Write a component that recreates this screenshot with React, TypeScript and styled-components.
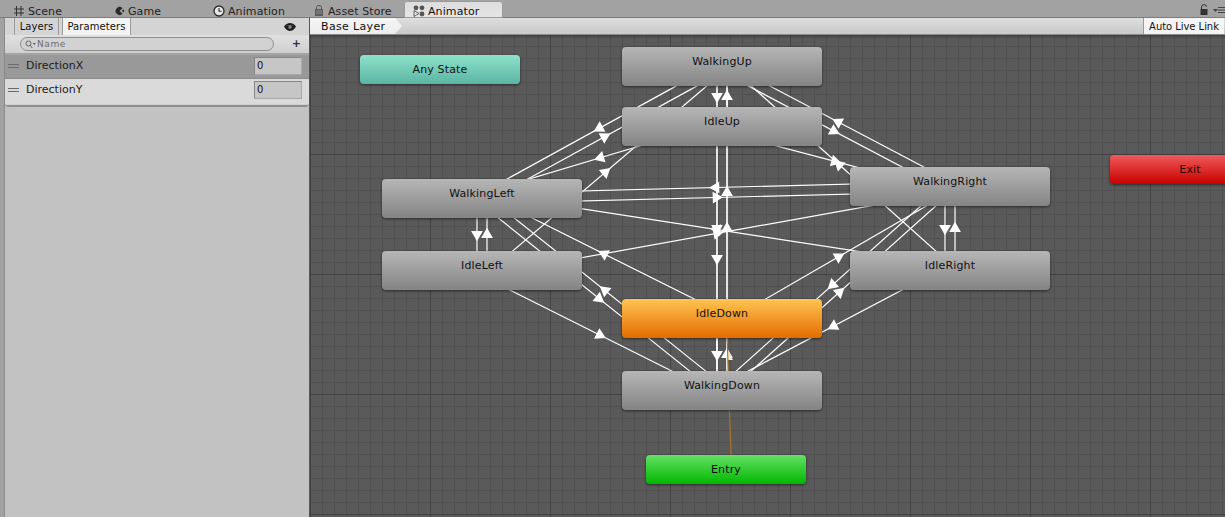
import React from "react";
import styled, { createGlobalStyle } from "styled-components";

const UI_FONT = `"DejaVu Sans", "Liberation Sans", sans-serif`;

const Global = createGlobalStyle`
  html, body { margin: 0; padding: 0; background: #a2a2a2; }
  body { font-family: ${UI_FONT}; font-size: 11px; color: #111; }
  * { box-sizing: border-box; }
`;

const Page = styled.div`
  width: 1225px;
  height: 517px;
  display: flex;
  flex-direction: column;
  overflow: hidden;
  background: #a2a2a2;
`;

const TabBar = styled.div`
  height: 18px;
  display: flex;
  align-items: flex-end;
  padding-left: 4px;
  border-bottom: 1px solid #7c7c7c;
`;

const Tab = styled.div<{ $active?: boolean; $width: number; $pad: number }>`
  width: ${(p) => p.$width}px;
  height: ${(p) => (p.$active ? 17 : 16)}px;
  padding-left: ${(p) => p.$pad}px;
  padding-top: ${(p) => (p.$active ? 3 : 4)}px;
  display: flex;
  align-items: center;
  gap: 3px;
  color: ${(p) => (p.$active ? "#111" : "#222")};
  letter-spacing: 0.1px;
  background: ${(p) => (p.$active ? "linear-gradient(#dcdcdc, #e6e6e6)" : "transparent")};
  border-radius: ${(p) => (p.$active ? "3px 3px 0 0" : "0")};
  box-shadow: ${(p) => (p.$active ? "inset 0 0 0 1px #9a9a9a" : "none")};
  margin-bottom: ${(p) => (p.$active ? "-1px" : "0")};
`;

const TabIcon = styled.svg`
  width: 12px;
  height: 12px;
  flex: none;
`;

const TabSpacer = styled.div`
  flex: 1;
`;

const WindowTools = styled.div`
  display: flex;
  align-items: center;
  gap: 5px;
  height: 16px;
`;

const Body = styled.div`
  flex: 1;
  min-height: 0;
  display: flex;
`;

const Sidebar = styled.div`
  width: 306px;
  flex: none;
  margin-left: 4px;
  display: flex;
  flex-direction: column;
  background: #c2c2c2;
  border-left: 1px solid #8a8a8a;
  border-right: 1px solid #555555;
`;

const SideTabs = styled.div`
  height: 17px;
  display: flex;
  align-items: stretch;
  padding-left: 9px;
  gap: 3px;
  background: #d4d4d4;
`;

const SideTab = styled.div<{ $active?: boolean; $width: number }>`
  width: ${(p) => p.$width}px;
  display: flex;
  align-items: center;
  justify-content: center;
  font-size: 10px;
  letter-spacing: 0.1px;
  background: ${(p) => (p.$active ? "#f4f4f4" : "transparent")};
  border-left: 1px solid #9a9a9a;
  border-right: 1px solid #9a9a9a;
`;

const EyeBox = styled.div`
  margin-left: auto;
  margin-right: 12px;
  display: flex;
  align-items: center;
`;

const SearchRow = styled.div`
  height: 20px;
  display: flex;
  align-items: flex-start;
  padding: 2px 8px 0 15px;
  background: linear-gradient(#e0e0e0, #cfcfcf);
  border-bottom: 2px solid #a4a4a4;
`;

const SearchPill = styled.div`
  width: 254px;
  height: 14px;
  border: 1px solid #8f8f8f;
  border-radius: 7px;
  background: #d2d2d2;
  display: flex;
  align-items: center;
  padding-left: 4px;
  gap: 1px;
  font-size: 9px;
  letter-spacing: 0.6px;
  color: #6e6e6e;
`;

const PlusIcon = styled.div`
  margin-left: auto;
  margin-right: 0;
  font-size: 11px;
  font-weight: 700;
  line-height: 14px;
  color: #333;
`;

const ParamList = styled.div`
  display: flex;
  flex-direction: column;
  border-bottom: 2px solid #8e8e8e;
  border-radius: 0 0 4px 4px;
  overflow: hidden;
`;

const ParamRow = styled.div<{ $selected?: boolean; $height: number }>`
  height: ${(p) => p.$height}px;
  display: flex;
  align-items: flex-start;
  padding: 2px 7px 0 3px;
  gap: 7px;
  background: ${(p) => (p.$selected ? "#999999" : "#dadada")};
  border-bottom: 1px solid ${(p) => (p.$selected ? "#8c8c8c" : "#d0d0d0")};
`;

const Grip = styled.div`
  width: 11px;
  height: 4px;
  margin-top: 7px;
  border-top: 1px solid #6c6c6c;
  border-bottom: 1px solid #6c6c6c;
`;

const ParamName = styled.div`
  flex: 1;
  margin-top: 1px;
  line-height: 16px;
  font-size: 11px;
  color: #1c1c1c;
`;

const ParamValue = styled.div`
  width: 48px;
  height: 18px;
  padding-left: 2px;
  line-height: 15px;
  font-size: 10px;
  background: #c6c6c6;
  border: 1px solid #868686;
  border-bottom-color: #a8a8a8;
  border-right-color: #a8a8a8;
`;

const Main = styled.div`
  flex: 1;
  min-width: 0;
  display: flex;
  flex-direction: column;
`;

const Breadcrumb = styled.div`
  height: 17px;
  display: flex;
  align-items: stretch;
  justify-content: space-between;
  background: linear-gradient(#dedede, #c9c9c9);
  border-bottom: 1px solid #8a8a8a;
`;

const Crumb = styled.div`
  width: 92px;
  padding-left: 11px;
  display: flex;
  align-items: center;
  letter-spacing: 0.35px;
  background: linear-gradient(#f6f6f6, #ececec);
  clip-path: polygon(0 0, 85px 0, 92px 50%, 85px 100%, 0 100%);
`;

const LiveLink = styled.div`
  width: 81px;
  margin-right: 1px;
  display: flex;
  align-items: center;
  justify-content: center;
  font-size: 10px;
  letter-spacing: -0.05px;
  background: #f4f4f4;
  border-left: 1px solid #9a9a9a;
`;

const Graph = styled.div`
  flex: 1;
  min-height: 0;
  position: relative;
  overflow: hidden;
  background-color: #5a5a5a;
  background-image:
    linear-gradient(rgba(0, 0, 0, 0.28), transparent 4px),
    linear-gradient(to right, #434343 1px, transparent 1px),
    linear-gradient(#434343 1px, transparent 1px),
    linear-gradient(to right, #515151 1px, transparent 1px),
    linear-gradient(#515151 1px, transparent 1px);
  background-size: 100% 100%, 120px 120px, 120px 120px, 12px 12px, 12px 12px;
  background-position: 0 0, 0 0, 0 -1px, 0 0, 0 -1px;
`;

const Wires = styled.svg`
  position: absolute;
  inset: 0;
  width: 915px;
  height: 482px;
`;

const NODE_SKINS = {
  gray: { top: "#b6b6b6", bottom: "#848484", text: "#111111" },
  orange: { top: "#ffc552", bottom: "#e36c00", text: "#111111" },
  green: { top: "#66e066", bottom: "#00b800", text: "#0c0c0c" },
  teal: { top: "#8ee2c9", bottom: "#5ab5a5", text: "#111111" },
  red: { top: "#ef5a5a", bottom: "#c80000", text: "#2a0808" },
};

type Skin = keyof typeof NODE_SKINS;

const StateNode = styled.div<{ $x: number; $y: number; $w: number; $h: number; $skin: Skin }>`
  position: absolute;
  left: ${(p) => p.$x - 310}px;
  top: ${(p) => p.$y - 35}px;
  width: ${(p) => p.$w}px;
  height: ${(p) => p.$h}px;
  padding-top: 8px;
  line-height: 14px;
  text-align: center;
  font-size: 11px;
  letter-spacing: 0.15px;
  color: ${(p) => NODE_SKINS[p.$skin].text};
  background: linear-gradient(${(p) => NODE_SKINS[p.$skin].top}, ${(p) => NODE_SKINS[p.$skin].bottom});
  border-radius: 4px;
  box-shadow: 0 1px 3px rgba(0, 0, 0, 0.55);
`;

type NodeDef = { id: string; label: string; x: number; y: number; w: number; h: number; skin: Skin };

const NODES: NodeDef[] = [
  { id: "any", label: "Any State", x: 360, y: 55, w: 160, h: 29, skin: "teal" },
  { id: "wu", label: "WalkingUp", x: 622, y: 47, w: 200, h: 39, skin: "gray" },
  { id: "iu", label: "IdleUp", x: 622, y: 107, w: 200, h: 39, skin: "gray" },
  { id: "wl", label: "WalkingLeft", x: 382, y: 179, w: 200, h: 39, skin: "gray" },
  { id: "il", label: "IdleLeft", x: 382, y: 251, w: 200, h: 39, skin: "gray" },
  { id: "wr", label: "WalkingRight", x: 850, y: 167, w: 200, h: 39, skin: "gray" },
  { id: "ir", label: "IdleRight", x: 850, y: 251, w: 200, h: 39, skin: "gray" },
  { id: "id", label: "IdleDown", x: 622, y: 299, w: 200, h: 39, skin: "orange" },
  { id: "wd", label: "WalkingDown", x: 622, y: 371, w: 200, h: 39, skin: "gray" },
  { id: "entry", label: "Entry", x: 646, y: 455, w: 160, h: 29, skin: "green" },
  { id: "exit", label: "Exit", x: 1110, y: 155, w: 160, h: 29, skin: "red" },
];

const TRANSITIONS: [string, string][] = [
  ["wu", "iu"], ["iu", "wu"],
  ["wu", "wl"], ["wl", "wu"], ["iu", "wl"], ["il", "wu"],
  ["wu", "wr"], ["wr", "wu"], ["iu", "wr"], ["ir", "wu"],
  ["wl", "il"], ["il", "wl"], ["wr", "ir"], ["ir", "wr"],
  ["wr", "wl"], ["wl", "wr"], ["ir", "wl"], ["il", "wr"],
  ["id", "wl"], ["wl", "wd"], ["wd", "wl"], ["il", "wd"],
  ["id", "wr"], ["wr", "wd"], ["wd", "wr"], ["ir", "wd"],
  ["iu", "wd"], ["id", "wu"], ["wu", "wd"], ["wd", "wu"],
  ["id", "wd"], ["wd", "id"],
];

const center = (id: string) => {
  const n = NODES.find((m) => m.id === id)!;
  return { x: n.x + n.w / 2 - 310, y: n.y + n.h / 2 - 35 };
};

const OFFSET = 5;
const ARROW_R = 6.8;

function Transition({ from, to, color }: { from: string; to: string; color: string }) {
  const a = center(from);
  const b = center(to);
  const len = Math.hypot(b.x - a.x, b.y - a.y);
  const dx = (b.x - a.x) / len;
  const dy = (b.y - a.y) / len;
  const ox = -dy * OFFSET;
  const oy = dx * OFFSET;
  const mx = (a.x + b.x) / 2 + ox;
  const my = (a.y + b.y) / 2 + oy;
  const angle = Math.atan2(dy, dx);
  const pts = [0, (2 * Math.PI) / 3, (4 * Math.PI) / 3]
    .map((t) => `${mx + Math.cos(angle + t) * ARROW_R},${my + Math.sin(angle + t) * ARROW_R}`)
    .join(" ");
  return (
    <g>
      <line x1={a.x + ox} y1={a.y + oy} x2={b.x + ox} y2={b.y + oy} stroke={color} strokeWidth={1.2} />
      <polygon points={pts} fill={color} />
    </g>
  );
}

function EyeGlyph() {
  return (
    <svg width="14" height="10" viewBox="0 0 14 10">
      <path d="M1 4.5C3 1.5 5 1 7 1s4 .5 6 3.5C11 8 9 9 7 9S3 8 1 4.5z" fill="#1f1f1f" />
      <path d="M3.2 4C5 2.8 9 2.8 10.8 4 9 3.4 5 3.4 3.2 4z" fill="#9a9a9a" />
      <circle cx="7" cy="5.2" r="1.6" fill="#8a8a8a" />
    </svg>
  );
}

export default function App() {
  return (
    <Page>
      <Global />
      <TabBar>
        <Tab $width={103} $pad={9}>
          <TabIcon viewBox="0 0 12 12">
            <path d="M3.5 1v10M8 1v10M1 4h10M1 8h10" stroke="#333" strokeWidth="1" fill="none" />
          </TabIcon>
          Scene
        </Tab>
        <Tab $width={98} $pad={6}>
          <TabIcon viewBox="0 0 12 12">
            <path d="M9.5 3.2A4 4 0 1 0 9.5 8.8L6.5 6z" fill="#2a2a2a" />
            <rect x="9.4" y="4.8" width="1.6" height="2.2" fill="#2a2a2a" />
          </TabIcon>
          Game
        </Tab>
        <Tab $width={100} $pad={8}>
          <TabIcon viewBox="0 0 12 12">
            <circle cx="6" cy="6" r="5" fill="#e8e8e8" stroke="#2a2a2a" strokeWidth="1.3" />
            <path d="M6 3v3.2h2.6" stroke="#2a2a2a" strokeWidth="1.1" fill="none" />
          </TabIcon>
          Animation
        </Tab>
        <Tab $width={99} $pad={8}>
          <TabIcon viewBox="0 0 12 12">
            <path d="M3.5 4V2.5A2.5 2 0 0 1 8.5 2.5V4" stroke="#555" fill="none" />
            <rect x="2" y="4" width="8" height="7" fill="#5c5c5c" />
            <path d="M3 6h6M3 8h6" stroke="#8c8c8c" />
          </TabIcon>
          Asset Store
        </Tab>
        <Tab $active $width={99} $pad={9}>
          <TabIcon viewBox="0 0 12 12">
            <circle cx="3" cy="2.8" r="2.4" fill="#555" />
            <circle cx="9" cy="2.8" r="2.4" fill="#555" />
            <circle cx="9" cy="9" r="2.4" fill="#555" />
            <path d="M1 5.5v6l5-3z" fill="none" stroke="#555" strokeWidth="0.9" />
          </TabIcon>
          Animator
        </Tab>
        <TabSpacer />
        <WindowTools>
          <svg width="8" height="11" viewBox="0 0 8 11">
            <path d="M1.5 5V2.8a2.5 2.2 0 0 1 5 0" stroke="#333" strokeWidth="1" fill="none" />
            <rect x="0.5" y="5" width="7" height="6" fill="#333" />
          </svg>
          <svg width="12" height="11" viewBox="0 0 12 11">
            <path d="M0 5h5L2.5 8z" fill="#444" />
            <path d="M5 3.5h7M5 6h7M5 8.5h7" stroke="#444" strokeWidth="1" />
          </svg>
        </WindowTools>
      </TabBar>
      <Body>
        <Sidebar>
          <SideTabs>
            <SideTab $width={45}>Layers</SideTab>
            <SideTab $active $width={69}>Parameters</SideTab>
            <EyeBox>
              <EyeGlyph />
            </EyeBox>
          </SideTabs>
          <SearchRow>
            <SearchPill>
              <svg width="11" height="9" viewBox="0 0 11 9">
                <circle cx="3.5" cy="3.5" r="2.5" fill="none" stroke="#666" />
                <path d="M5.3 5.3L7.2 8" stroke="#666" />
                <path d="M7.5 3h3.4L9.2 5z" fill="#666" />
              </svg>
              Name
            </SearchPill>
            <PlusIcon>+</PlusIcon>
          </SearchRow>
          <ParamList>
            <ParamRow $selected $height={24}>
              <Grip />
              <ParamName>DirectionX</ParamName>
              <ParamValue>0</ParamValue>
            </ParamRow>
            <ParamRow $height={26}>
              <Grip />
              <ParamName>DirectionY</ParamName>
              <ParamValue>0</ParamValue>
            </ParamRow>
          </ParamList>
        </Sidebar>
        <Main>
          <Breadcrumb>
            <Crumb>Base Layer</Crumb>
            <LiveLink>Auto Live Link</LiveLink>
          </Breadcrumb>
          <Graph>
            <Wires viewBox="0 0 915 482">
              {TRANSITIONS.map(([f, t]) => (
                <Transition key={`${f}-${t}`} from={f} to={t} color="#ffffff" />
              ))}
              <polygon points="418.5,316 423,325 416,325" fill="#f2eccf" />
              <line x1="421.5" y1="434" x2="416.5" y2="283" stroke="#a8752a" strokeWidth="1.2" />
            </Wires>
            {NODES.map((n) => (
              <StateNode key={n.id} $x={n.x} $y={n.y} $w={n.w} $h={n.h} $skin={n.skin}>
                {n.label}
              </StateNode>
            ))}
          </Graph>
        </Main>
      </Body>
    </Page>
  );
}
